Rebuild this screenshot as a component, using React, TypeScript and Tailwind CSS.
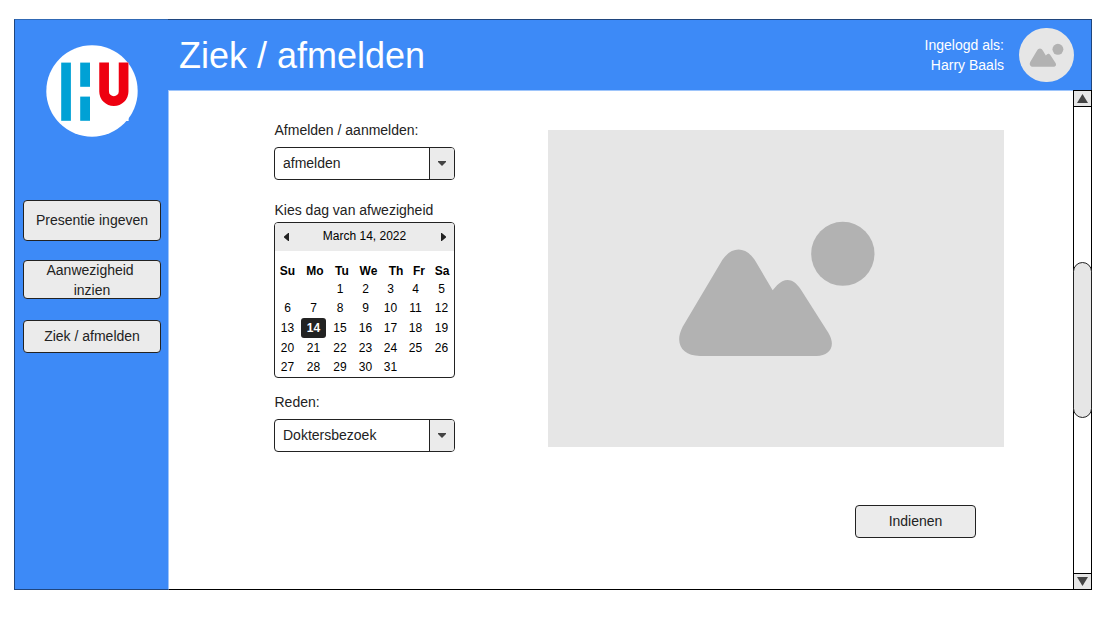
import React from "react";

const navItems = [
  { label: "Presentie ingeven", size: "h-[41px]" },
  { label: "Aanwezigheid\u00a0\ninzien", size: "mt-[19px] h-[39px]" },
  { label: "Ziek / afmelden", size: "mt-[21px] h-[33px]" },
];

const weekdays = ["Su", "Mo", "Tu", "We", "Th", "Fr", "Sa"];
const leadingBlanks = 2;
const selectedDay = 14;
const cells: (number | null)[] = [
  ...Array<null>(leadingBlanks).fill(null),
  ...Array.from({ length: 31 }, (_, i) => i + 1),
];

function Logo() {
  return (
    <svg className="block h-[92px] w-[92px]" viewBox="0 0 92 92">
      <circle cx="46" cy="46" r="45.7" fill="#fff" />
      <rect x="15" y="17.6" width="67.6" height="58.4" fill="#fff" />
      <g fill="#00a1d5">
        <rect x="15.2" y="17.6" width="9.7" height="58.2" />
        <rect x="34.2" y="17.6" width="9.8" height="24.2" />
        <rect x="34.2" y="51.6" width="9.8" height="24.2" />
      </g>
      <path d="M58.1 17.6V46.4a9.75 9.75 0 0 0 19.5 0V17.6" fill="none" stroke="#ee0010" strokeWidth="9.7" />
    </svg>
  );
}

function Landscape() {
  return (
    <g fill="#b2b2b2">
      <path d="M120 438C66 438 42 400 68 350L182 158C212 106 258 106 288 156L338 241L351 226C376 202 400 205 422 238L505 368C530 409 508 438 470 438Z" />
      <ellipse cx="548.5" cy="131.5" rx="95" ry="96" />
    </g>
  );
}

function Select({ value, className }: { value: string; className: string }) {
  return (
    <div className={`flex h-[33px] overflow-hidden rounded-[4px] border border-[#222] bg-white ${className}`}>
      <div className="flex flex-1 items-center pb-[2px] pl-2 text-[14px] leading-5">{value}</div>
      <div className="flex w-[25px] items-center justify-center border-l border-[#222] bg-[#ebebeb]">
        <svg className="h-[5px] w-2" viewBox="0 0 8 5">
          <path d="M0 0H8V1L4 5L0 1Z" fill="#444" />
        </svg>
      </div>
    </div>
  );
}

function Calendar() {
  return (
    <div className="mt-[2px] h-[156px] overflow-hidden rounded-[4px] border border-[#222] bg-white text-[12px] text-black">
      <div className="flex h-7 items-center justify-between bg-[#ebebeb] pr-[8px] pl-[9px]">
        <svg className="h-2 w-[5px]" viewBox="0 0 5 8">
          <path d="M5 0V8H4.2L0 4.4V3.6L4.2 0Z" fill="#222" />
        </svg>
        <span className="-mt-[2px] mr-px leading-4">March 14, 2022</span>
        <svg className="h-2 w-[5px]" viewBox="0 0 5 8">
          <path d="M0 0V8H0.8L5 4.4V3.6L0.8 0Z" fill="#222" />
        </svg>
      </div>
      <div className="mt-[12px] grid h-4 grid-cols-[25px_30px_24px_29px_26px_20px_26px] text-center leading-4 font-bold">
        {weekdays.map((d) => (
          <span key={d}>{d}</span>
        ))}
      </div>
      <div className="grid grid-cols-[25px_27px_26px_25px_25px_25px_27px] grid-rows-[19px_20px_20px_19px_20px] text-center leading-[20px]">
        {cells.map((day, i) =>
          day === selectedDay ? (
            <span key={i} className="mx-auto w-[25px] rounded-[3px] bg-[#222] font-bold text-white">
              {day}
            </span>
          ) : (
            <span key={i}>{day}</span>
          ),
        )}
      </div>
    </div>
  );
}

function ScrollButton({ up }: { up?: boolean }) {
  return (
    <div
      className={`flex items-center justify-center bg-[#e6e6e6] ${
        up ? "h-[17px] border-y border-black" : "h-4 border-t border-black"
      }`}
    >
      <svg className="h-[9px] w-[11px]" viewBox="0 0 11 9">
        <path d={up ? "M5.5 0L11 9H0Z" : "M0 0H11L5.5 9Z"} fill="#444" />
      </svg>
    </div>
  );
}

export default function App() {
  return (
    <div className="h-[617px] w-[1115px] bg-white pt-[19px] pl-[14px] font-['Liberation_Sans',Arial,sans-serif] text-[#222]">
      <div className="flex h-[571px] w-[1078px]">
        <aside className="flex w-[154px] shrink-0 flex-col items-center border border-r-0 border-[#1f457d] border-t-[#3069b5] bg-[#3d8af7]">
          <div className="mt-[25px] mb-[63px]">
            <Logo />
          </div>
          {navItems.map((item) => (
            <button
              key={item.label}
              className={`flex w-[138px] items-center justify-center rounded-[4px] border border-[#222] bg-[#ebebeb] pr-[7px] pl-2 text-center text-[14px] leading-5 whitespace-pre-line ${
                item.label.includes("\n") ? "" : "pb-[2px]"
              } ${item.size}`}
            >
              {item.label}
            </button>
          ))}
        </aside>
        <div className="flex flex-1 flex-col">
          <header className="flex h-[72px] items-center border border-l-0 border-[#1f457d] border-b-[#9ec5fb] bg-[#3d8af7] pr-[17px] pl-[11px] text-white">
            <h1 className="flex-1 pt-[2px] text-[36px] leading-[42px]">Ziek / afmelden</h1>
            <p className="mr-[15px] text-right text-[14px] leading-5">
              Ingelogd als:
              <br />
              Harry Baals
            </p>
            <svg className="h-[54px] w-[55px] rounded-full bg-[#e6e6e6]" viewBox="-130 -240 959 942">
              <Landscape />
            </svg>
          </header>
          <div className="flex flex-1">
            <main className="flex flex-1 items-start border-b border-l border-b-black border-l-[#9ec5fb] pl-[105px]">
              <section className="mt-[29px] w-[181px]">
                <div className="pl-[0.5px] text-[14px] leading-5">Afmelden / aanmelden:</div>
                <Select value="afmelden" className="mt-[7px]" />
                <div className="mt-5 pl-[0.5px] text-[14px] leading-5">Kies dag van afwezigheid</div>
                <Calendar />
                <div className="mt-[14px] pl-[0.5px] text-[14px] leading-5">Reden:</div>
                <Select value="Doktersbezoek" className="mt-[7px]" />
              </section>
              <section className="mt-[39px] ml-[93px] flex w-[456px] flex-col">
                <svg className="h-[317px] w-[456px] bg-[#e6e6e6]" viewBox="-336 -240 1368 951">
                  <Landscape />
                </svg>
                <button className="mt-[58px] mr-[28px] h-[33px] w-[121px] self-end rounded-[4px] border border-[#222] bg-[#ebebeb] pb-[2px] text-[14px] leading-5">
                  Indienen
                </button>
              </section>
            </main>
            <div className="-mt-px flex w-[19px] flex-col border border-t-0 border-black bg-white">
              <ScrollButton up />
              <div className="flex-1">
                <div className="-mx-px mt-[155px] h-[156px] rounded-[9.5px] border border-[#222] bg-[#e6e6e6]" />
              </div>
              <ScrollButton />
            </div>
          </div>
        </div>
      </div>
    </div>
  );
}
